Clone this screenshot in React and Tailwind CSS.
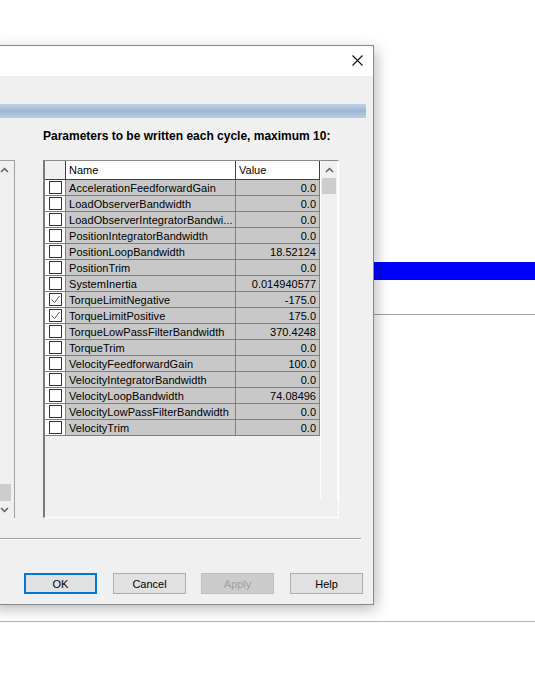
import React from 'react'

const ROWS = [
    ['AccelerationFeedforwardGain', '0.0'],
    ['LoadObserverBandwidth', '0.0'],
    ['LoadObserverIntegratorBandwi...', '0.0'],
    ['PositionIntegratorBandwidth', '0.0'],
    ['PositionLoopBandwidth', '18.52124'],
    ['PositionTrim', '0.0'],
    ['SystemInertia', '0.014940577'],
    ['TorqueLimitNegative', '-175.0', true],
    ['TorqueLimitPositive', '175.0', true],
    ['TorqueLowPassFilterBandwidth', '370.4248'],
    ['TorqueTrim', '0.0'],
    ['VelocityFeedforwardGain', '100.0'],
    ['VelocityIntegratorBandwidth', '0.0'],
    ['VelocityLoopBandwidth', '74.08496'],
    ['VelocityLowPassFilterBandwidth', '0.0'],
    ['VelocityTrim', '0.0'],
]

function Chevron({ down = false }) {
    return (
        <svg width="9" height="6" viewBox="0 0 9 6" className="block">
            <polyline
                points={down ? '1,1 4.5,4.5 8,1' : '1,5 4.5,1.5 8,5'}
                fill="none"
                stroke="#606060"
                strokeWidth="1.5"
            />
        </svg>
    )
}

function CheckBox({ checked }) {
    return (
        <div className="w-[13px] h-[13px] border border-[#333] bg-white flex items-center justify-center">
            {checked && (
                <svg width="11" height="11" viewBox="0 0 11 11">
                    <polyline points="1.5,5.5 4.5,8.5 9.5,2" fill="none" stroke="#555" strokeWidth="1" />
                </svg>
            )}
        </div>
    )
}

function Button({ children, primary, disabled }) {
    return (
        <div
            className={`w-[73px] h-[21px] flex items-center justify-center pt-px text-[11px] ${primary ? 'border-2 border-[#0078d7] bg-[#e1e1e1]' : disabled ? 'border border-[#bfbfbf] bg-[#cccccc] text-[#a0a0a0]' : 'border border-[#adadad] bg-[#e1e1e1]'}`}
        >
            {children}
        </div>
    )
}

export default function App() {
    return (
        <div className="relative w-[535px] h-[678px] bg-white overflow-hidden font-['Liberation_Sans',Arial,sans-serif] text-black">
            {/* background application */}
            <div className="flex flex-col">
                <div className="h-[262px]" />
                <div className="ml-[373px] h-[18px] bg-[#0000ff]" />
                <div className="h-[34px]" />
                <div className="ml-[374px] h-px bg-[#a0a0a0]" />
                <div className="h-[306px]" />
                <div className="h-px bg-[#b4b4b4]" />
            </div>

            {/* dialog window */}
            <div className="absolute left-[-10px] top-[45px] w-[384px] h-[560px] border border-[#8a8a8a] bg-[#f0f0f0] shadow-[2px_4px_14px_rgba(0,0,0,0.28)] flex flex-col">
                <div className="h-[30px] bg-white flex justify-end pr-[10px] pt-[9px] shrink-0">
                    <svg width="11" height="11" viewBox="0 0 11 11">
                        <path d="M0.5 0.5 L10.5 10.5 M10.5 0.5 L0.5 10.5" stroke="#111" strokeWidth="1.1" />
                    </svg>
                </div>

                <div className="mt-[28px] w-[375px] h-[14px] bg-gradient-to-b from-[#c3d2e5] via-[#9bb5d5] to-[#bccde3]" />

                <div className="mt-[11px] ml-[52px] text-[12px] leading-[14px] font-bold">
                    Parameters to be written each cycle, maximum 10:
                </div>

                <div className="mt-[17px] flex h-[358px]">
                    {/* left list, mostly hidden */}
                    <div className="w-[24px] border-t border-r border-[#a0a0a0] flex justify-end pr-px">
                        <div className="w-[17px] flex flex-col">
                            <div className="h-[17px] flex items-center justify-center">
                                <Chevron />
                            </div>
                            <div className="flex-1" />
                            <div className="h-[17px] mx-[2px] bg-[#cdcdcd]" />
                            <div className="h-[17px] flex items-center justify-center">
                                <Chevron down />
                            </div>
                        </div>
                    </div>

                    {/* parameter grid */}
                    <div className="ml-[28px] w-[296px] border-l-2 border-t border-l-[#7a7a7a] border-t-[#8a8a8a] border-r border-b border-r-white border-b-white flex">
                        <div className="w-[275px] flex flex-col text-[11px]">
                            <div className="h-[19px] flex">
                                <div className="w-[21px] bg-[#f0f0f0] border-r border-b border-[#404040]" />
                                <div className="w-[170px] bg-white border-r border-b border-[#404040] pl-[3px] flex items-center">Name</div>
                                <div className="w-[84px] bg-white border-r border-b border-[#404040] pl-[3px] flex items-center">Value</div>
                            </div>
                            {ROWS.map(([name, value, checked]) => (
                                <div key={name} className="h-[16px] flex">
                                    <div className="w-[21px] bg-white border-r border-b border-[#808080] flex items-center justify-center">
                                        <CheckBox checked={checked} />
                                    </div>
                                    <div className="w-[170px] bg-[#c8c8c8] border-r border-b border-[#808080] pl-[3px] pt-[2px] flex items-center whitespace-nowrap overflow-hidden tracking-[0.05px]">
                                        {name}
                                    </div>
                                    <div className="w-[84px] bg-[#c8c8c8] border-r border-b border-[#808080] pr-[3px] pt-[2px] flex items-center justify-end">
                                        {value}
                                    </div>
                                </div>
                            ))}
                        </div>
                        <div className="w-[18px] h-[338px] border-l border-r border-white flex flex-col">
                            <div className="h-[17px] flex items-center justify-center">
                                <Chevron />
                            </div>
                            <div className="mx-[1px] h-[16px] bg-[#cdcdcd]" />
                        </div>
                    </div>
                </div>

                <div className="mt-[20px] w-[370px] h-[2px] border-t border-[#a0a0a0] border-b border-b-white" />

                <div className="mt-[33px] ml-[33px] flex">
                    <Button primary>OK</Button>
                    <div className="w-[16px]" />
                    <Button>Cancel</Button>
                    <div className="w-[15px]" />
                    <Button disabled>Apply</Button>
                    <div className="w-[16px]" />
                    <Button>Help</Button>
                </div>
            </div>
        </div>
    )
}
